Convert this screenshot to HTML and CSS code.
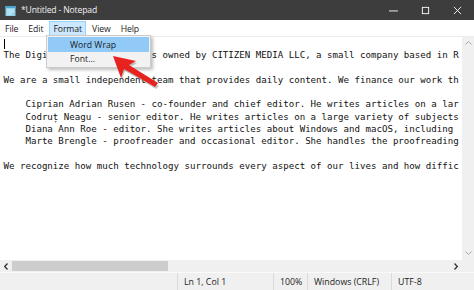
FILE: index.html
```html
<!DOCTYPE html>
<html lang="en">
<head>
  <meta charset="UTF-8" />
  <title>*Untitled - Notepad</title>
  <link rel="stylesheet" href="styles.css">
</head>
<body>

  <div class="window">
    <div class="titlebar">
      <svg class="app-icon" width="11" height="11" viewBox="0 0 11 11">
        <rect x="0.5" y="1" width="10" height="10" fill="#8fd0ea"/>
        <rect x="0.5" y="1" width="10" height="2" fill="#4aa6cf"/>
        <line x1="2" y1="5" x2="9" y2="5" stroke="#e9f7fd" stroke-width="0.8"/>
        <line x1="2" y1="7" x2="9" y2="7" stroke="#e9f7fd" stroke-width="0.8"/>
        <line x1="2" y1="9" x2="7" y2="9" stroke="#e9f7fd" stroke-width="0.8"/>
      </svg>
      <span class="title">*Untitled - Notepad</span>
      <div class="controls">
        <svg width="10" height="10" viewBox="0 0 10 10"><line x1="0" y1="5.5" x2="10" y2="5.5" stroke="#fff" stroke-width="1"/></svg>
        <svg width="10" height="10" viewBox="0 0 10 10"><rect x="1.5" y="1.5" width="7" height="7" fill="none" stroke="#fff" stroke-width="1"/></svg>
        <svg width="10" height="10" viewBox="0 0 10 10"><path d="M1 1 L9 9 M9 1 L1 9" stroke="#fff" stroke-width="1"/></svg>
      </div>
    </div>

    <div class="menubar">
      <span class="menu-item">File</span>
      <span class="menu-item">Edit</span>
      <span class="menu-item active">Format</span>
      <span class="menu-item">View</span>
      <span class="menu-item">Help</span>
    </div>

    <div class="editor">
      <div class="text-area">
        <span class="caret"></span>
<pre class="text">

The Digital Citizen brand is owned by CITIZEN MEDIA LLC, a small company based in R

We are a small independent team that provides daily content. We finance our work th

    Ciprian Adrian Rusen - co-founder and chief editor. He writes articles on a lar
    Codruț Neagu - senior editor. He writes articles on a large variety of subjects
    Diana Ann Roe - editor. She writes articles about Windows and macOS, including
    Marte Brengle - proofreader and occasional editor. She handles the proofreading

We recognize how much technology surrounds every aspect of our lives and how diffic</pre>
      </div>
      <div class="vscroll">
        <svg width="7" height="4" viewBox="0 0 7 4"><path d="M0.5 3.5 L3.5 0.5 L6.5 3.5" fill="none" stroke="#a8a8a8" stroke-width="1"/></svg>
        <svg width="7" height="4" viewBox="0 0 7 4"><path d="M0.5 0.5 L3.5 3.5 L6.5 0.5" fill="none" stroke="#a8a8a8" stroke-width="1"/></svg>
      </div>
    </div>

    <div class="hscroll">
      <span class="h-arrow">
        <svg width="4" height="7" viewBox="0 0 4 7"><path d="M3.5 0.5 L0.7 3.5 L3.5 6.5" fill="none" stroke="#333" stroke-width="1.3"/></svg>
      </span>
      <div class="h-track"><div class="h-thumb"></div></div>
      <span class="h-arrow">
        <svg width="4" height="7" viewBox="0 0 4 7"><path d="M0.5 0.5 L3.3 3.5 L0.5 6.5" fill="none" stroke="#333" stroke-width="1.3"/></svg>
      </span>
      <div class="corner"></div>
    </div>

    <div class="statusbar">
      <div class="cell"></div>
      <div class="cell">Ln 1, Col 1</div>
      <div class="cell">100%</div>
      <div class="cell">Windows (CRLF)</div>
      <div class="cell">UTF-8</div>
    </div>

    <div class="dropdown">
      <div class="drop-item selected">Word Wrap</div>
      <div class="drop-item">Font...</div>
    </div>

    <svg class="arrow" width="474" height="290" viewBox="0 0 474 290">
      <polygon points="114,58 137,63 130,67 159,86 156,89 125,71 122,80" fill="rgba(0,0,0,0.22)"/>
      <polygon points="113,56 136,61 129,65 158,83 155,87 124,69 121,78" fill="#e8231f"/>
    </svg>
  </div>

</body>
</html>
```

FILE: styles.css
```css
body {
  margin: 0;
  padding: 0;
  background: #ffffff;
}

.window {
  position: relative;
  width: 474px;
  height: 290px;
  overflow: hidden;
  display: flex;
  flex-direction: column;
  font-family: 'Open Sans', 'Noto Sans', sans-serif;
  font-size: 8.7px;
  color: #1a1a1a;
}

.titlebar {
  height: 20px;
  flex: none;
  background: #3d3d3d;
  display: flex;
  align-items: center;
  color: #f2f2f2;
}

.app-icon {
  margin-left: 5px;
  margin-right: 5px;
}

.title {
  font-size: 8.6px;
  letter-spacing: -0.15px;
}

.controls {
  margin-left: auto;
  display: flex;
  align-items: center;
}

.controls svg {
  width: 9px;
  height: 9px;
  margin-left: 23px;
}

.controls svg:first-child {
  margin-left: 0;
}

.controls svg:last-child {
  margin-right: 12px;
}

.menubar {
  height: 15px;
  flex: none;
  display: flex;
  align-items: stretch;
  padding-top: 1px;
  background: #ffffff;
  border-bottom: 1px solid #ececec;
  letter-spacing: -0.1px;
}

.menu-item {
  display: flex;
  align-items: center;
  padding: 0 4px;
  margin-right: 2px;
}

.menu-item:first-child {
  margin-left: 1px;
}

.menu-item.active {
  background: #cce8ff;
  border: 1px solid #99d1ff;
  padding: 0 3px;
}

.editor {
  flex: 1;
  display: flex;
  min-height: 0;
}

.text-area {
  position: relative;
  flex: 1;
  overflow: hidden;
  padding-left: 3.5px;
}

.caret {
  position: absolute;
  left: 4px;
  top: 2px;
  width: 1px;
  height: 10px;
  background: #000;
}

.text {
  margin: 0;
  font-family: 'DejaVu Sans Mono', 'Liberation Mono', monospace;
  font-size: 9.12px;
  line-height: 12.3px;
  color: #111;
  white-space: pre;
}

.vscroll {
  width: 12px;
  flex: none;
  background: #f0f0f0;
  display: flex;
  flex-direction: column;
  justify-content: space-between;
  align-items: center;
  padding: 4px 0 5px;
  box-sizing: border-box;
}

.hscroll {
  height: 12px;
  flex: none;
  display: flex;
  align-items: stretch;
  background: #f0f0f0;
}

.h-arrow {
  width: 12px;
  display: flex;
  align-items: center;
  justify-content: center;
}

.h-track {
  flex: 1;
  padding: 1px 0;
}

.h-thumb {
  width: 156px;
  height: 100%;
  background: #cdcdcd;
}

.corner {
  width: 12px;
  background: #f0f0f0;
}

.statusbar {
  height: 17px;
  flex: none;
  display: grid;
  grid-template-columns: 177px 96px 34px 84px 1fr;
  background: #f0f0f0;
  border-top: 1px solid #fafafa;
  font-size: 8.8px;
  color: #222;
}

.cell {
  display: flex;
  align-items: center;
  padding-left: 6px;
  border-left: 1px solid #dadada;
}

.cell:first-child {
  border-left: none;
}

.dropdown {
  position: absolute;
  left: 46px;
  top: 35px;
  width: 101px;
  padding: 1px;
  background: #f2f2f2;
  border: 1px solid #cccccc;
  box-shadow: 2px 2px 3px rgba(0, 0, 0, 0.25);
}

.drop-item {
  height: 14px;
  display: flex;
  align-items: center;
  padding-left: 22px;
}

.drop-item.selected {
  height: 15px;
  background: #91c9f7;
}

.arrow {
  position: absolute;
  left: 0;
  top: 0;
  pointer-events: none;
}
```
